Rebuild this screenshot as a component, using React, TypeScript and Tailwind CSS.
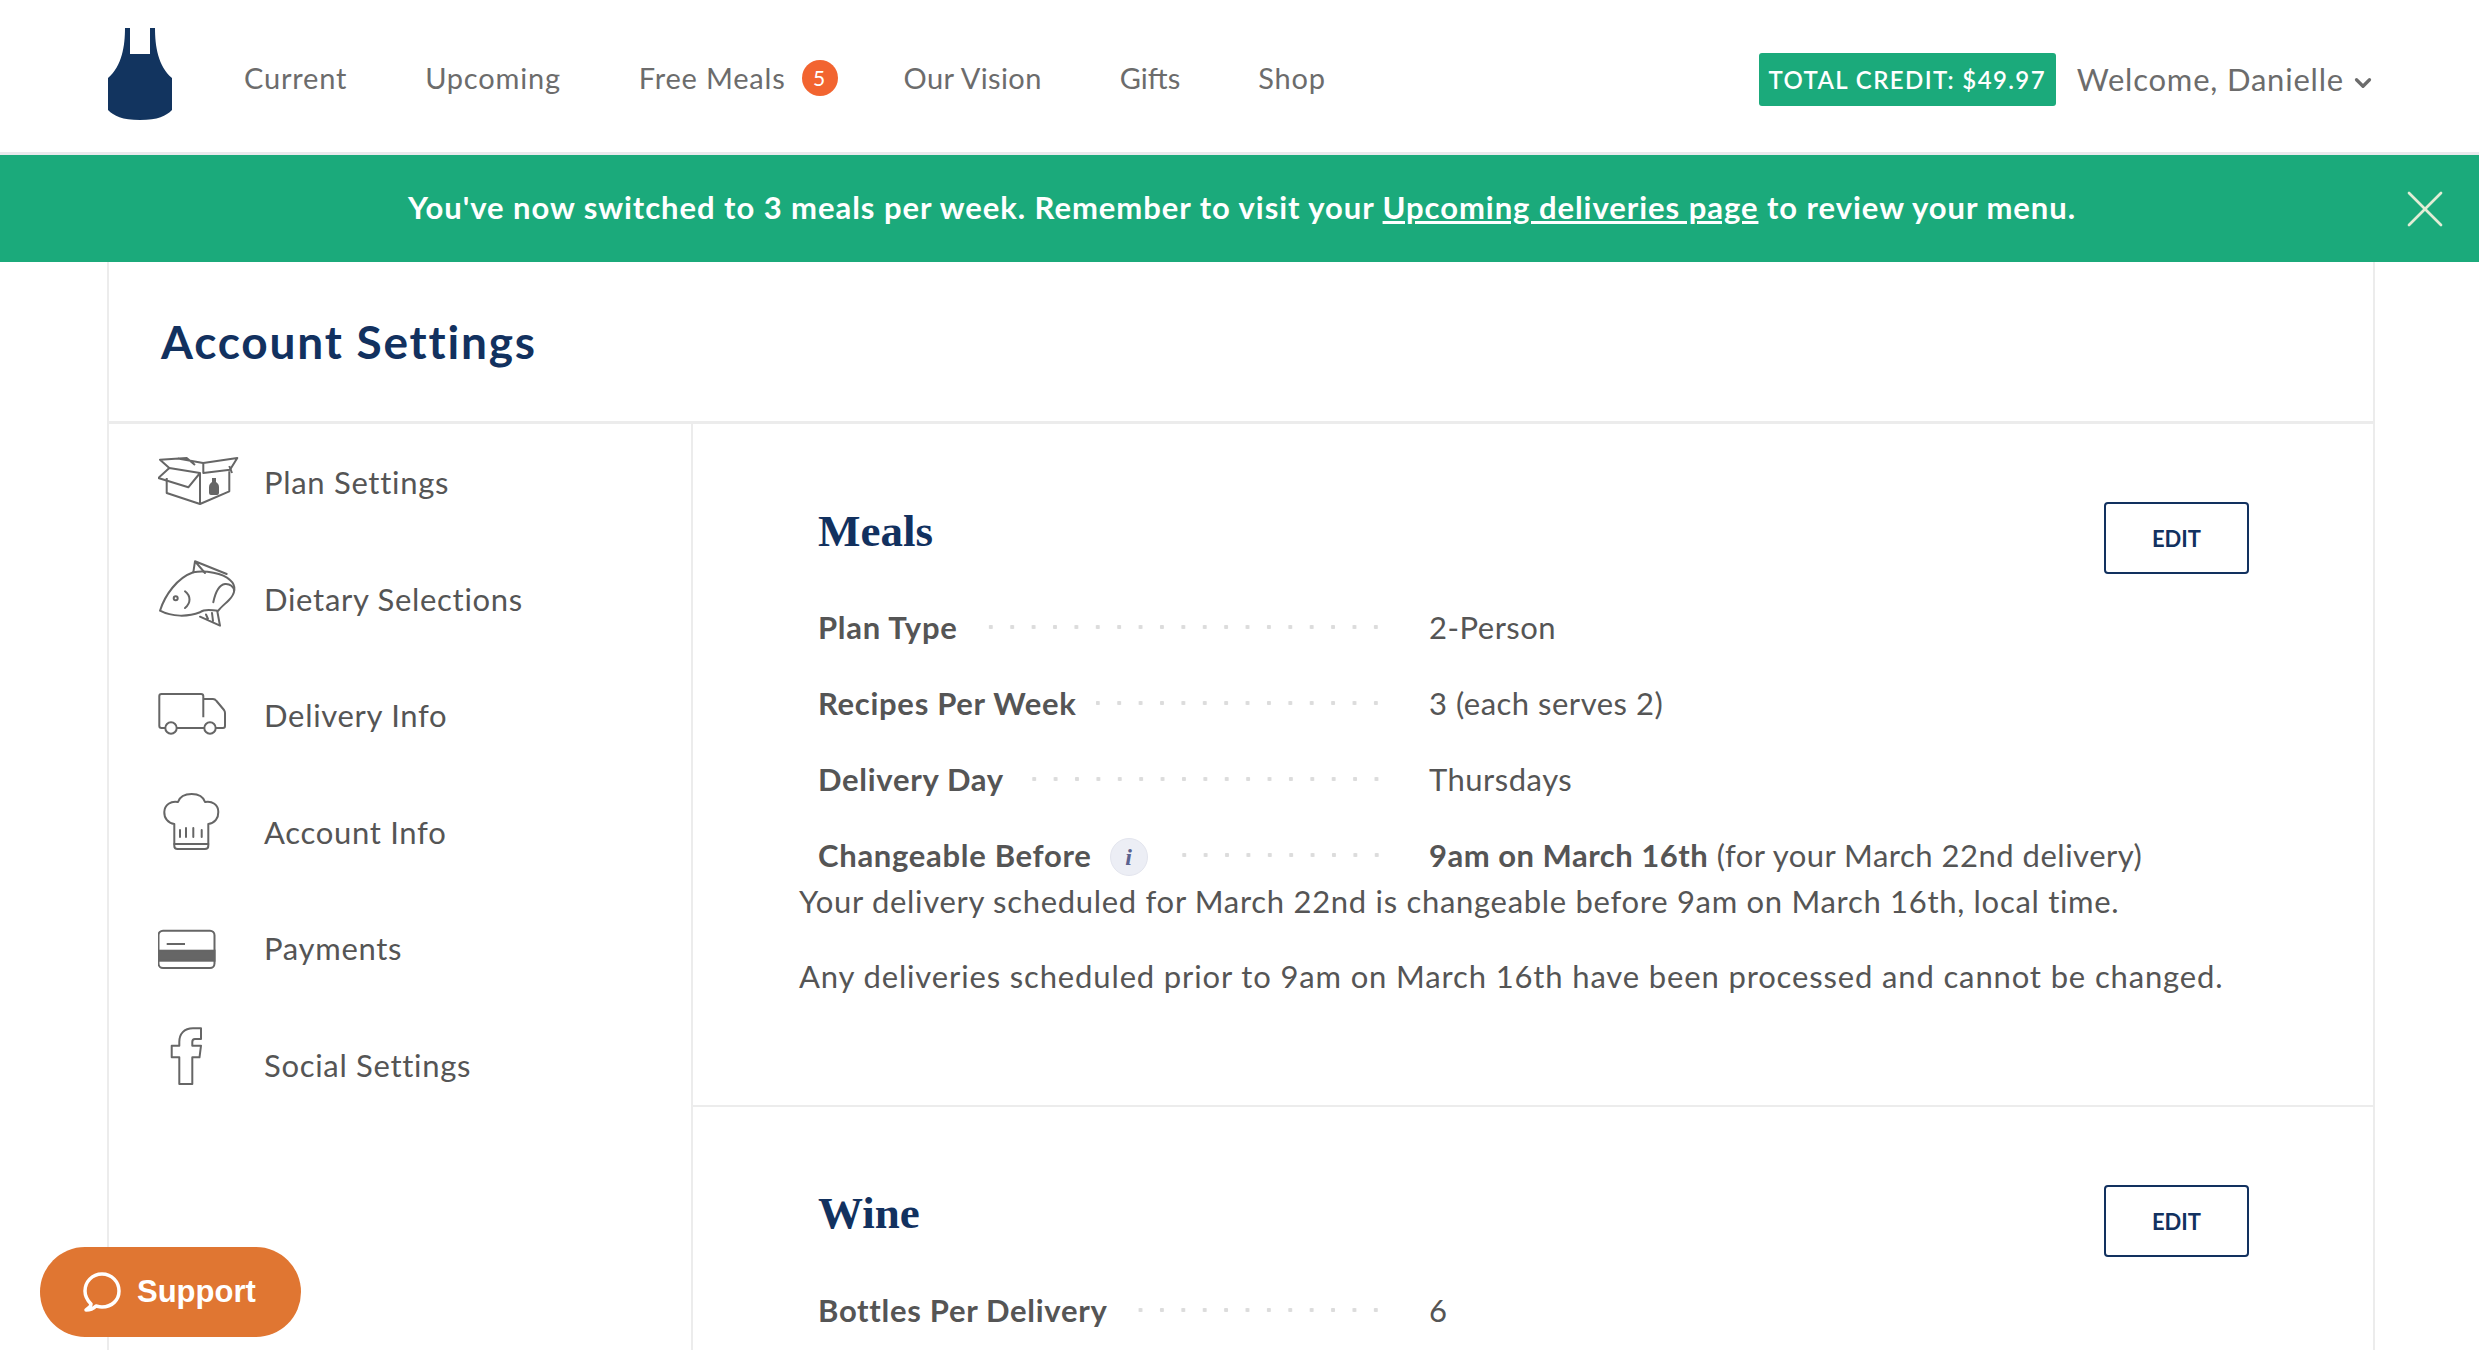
import { ChevronDown, X } from 'lucide-react';

const navLinks = [
  { label: 'Current', tracking: 'tracking-[0.8px]' },
  { label: 'Upcoming', tracking: 'tracking-[0.8px]' },
  { label: 'Free Meals', tracking: 'tracking-[0.8px]' },
  { label: 'Our Vision', tracking: 'tracking-[0.4px]' },
  { label: 'Gifts', tracking: 'tracking-normal' },
  { label: 'Shop', tracking: 'tracking-[0.8px]' },
];

const ink = '#666666';

function PlanIcon() {
  return (
    <svg viewBox="0 0 90 90" className="w-[90px] h-[90px] shrink-0" fill="none" stroke={ink} strokeWidth="2" strokeLinejoin="round">
      <path d="M8.7 41V56L42 67L71.3 54.3V34.3M42 67V36" />
      <path d="M45.3 35V26L79.3 21L72 32.7L45.3 36Z" />
      <path d="M0.3 41L11.3 31L42 36L30.3 50.3Z" />
      <path d="M11.3 31L2 22.7L28.7 21L37 28M20 21.5L45 26" />
      <path d="M71.3 29L74 36" />
      <path d="M51 50C51 47 53 46 54 45V41H58V45C59 46 61 47 61 50V56Q61 58 59 58H53Q51 58 51 56Z" fill={ink} stroke="none" />
    </svg>
  );
}

function FishIcon() {
  return (
    <svg viewBox="0 0 90 90" className="w-[90px] h-[90px] shrink-0" fill="none" stroke={ink} strokeWidth="2" strokeLinejoin="round" strokeLinecap="round">
      <path d="M2 56.7C7 41 19 24 35.3 18.3C47 16 65 19 72 26C79 32 77 40 71 46C67 50 63 53 60.3 56.7C55 57 48 54 42 58.3C30 63 14 63 2 56.7Z" />
      <path d="M55.3 48.3C57 40 60 31 67 30C72 29.5 76 33 76 37" />
      <path d="M35.3 18.3L37 7.3L68.7 20M37 7.3L47 19" />
      <path d="M42 62.7L62 71.7L59.3 57.3M48 60.5L50 65M54 59L55 67" />
      <circle cx="17.7" cy="44.3" r="2" />
      <path d="M27 37.3C33 42 33 49 27 54" />
    </svg>
  );
}

function TruckIcon() {
  return (
    <svg viewBox="0 0 90 90" className="w-[90px] h-[90px] shrink-0" fill="none" stroke={ink} strokeWidth="2" strokeLinejoin="round">
      <path d="M7.3 58H3.5Q1.3 58 1.3 55.7V26Q1.3 24 3.5 24H43Q45.3 24 45.3 26V47.3" />
      <path d="M45.3 29H55Q57 29 58.5 31L66 40Q67 41.5 67 43V55.7Q67 58 65 58H57.7M46.3 58H18.7" />
      <circle cx="13" cy="58" r="5.7" />
      <circle cx="52" cy="58" r="5.7" />
    </svg>
  );
}

function HatIcon() {
  return (
    <svg viewBox="0 0 90 90" className="w-[90px] h-[90px] shrink-0" fill="none" stroke={ink} strokeWidth="2" strokeLinejoin="round" strokeLinecap="round">
      <path d="M16.3 37C10 36 6 31 6.3 25C6.5 18 13 13.5 20 15C22 9 28 7 33.7 7C39 7 45 9 47 15C54 13.5 60.5 18 60.3 25C60.5 31 57 36 50.3 37V59Q50.3 62 47 62H19.6Q16.3 62 16.3 59Z" />
      <path d="M16.3 57H50.3M22 43V50M28 41V50M35.3 41V50M43.7 43V50" />
    </svg>
  );
}

function CardIcon() {
  return (
    <svg viewBox="0 0 90 90" className="w-[90px] h-[90px] shrink-0" fill="none" stroke={ink} strokeWidth="2">
      <rect x="0.5" y="27.7" width="56" height="37.3" rx="4.5" />
      <rect x="0.5" y="47.7" width="56" height="10" fill={ink} />
      <path d="M8.7 41H27" />
    </svg>
  );
}

function FacebookIcon() {
  return (
    <svg viewBox="0 0 90 90" className="w-[90px] h-[90px] shrink-0" fill="none" stroke={ink} strokeWidth="2" strokeLinejoin="round">
      <path d="M43 8.3H35C26 8.3 21.3 14 21.3 22V25.7H13.7V37.3H21.3V64H34.3V37.3H41.5L43 25.7H34.3V22Q34.3 19 37 19H43Z" />
    </svg>
  );
}

const sideItems = [
  { label: 'Plan Settings', icon: <PlanIcon /> },
  { label: 'Dietary Selections', icon: <FishIcon /> },
  { label: 'Delivery Info', icon: <TruckIcon /> },
  { label: 'Account Info', icon: <HatIcon /> },
  { label: 'Payments', icon: <CardIcon /> },
  { label: 'Social Settings', icon: <FacebookIcon /> },
];

function Row({ label, info, children }: { label: string; info?: boolean; children: React.ReactNode }) {
  return (
    <div className="flex items-center h-[76px]">
      <div className="w-[569px] flex items-center">
        <span className="font-bold whitespace-nowrap text-[#555555] tracking-[0.7px]">{label}</span>
        {info && (
          <span className="ml-[18px] w-[38px] h-[38px] shrink-0 rounded-full bg-[#eceef5] border border-[#e3e5ee] mt-[4px] flex items-center justify-center font-['Liberation_Serif',serif] italic font-bold text-[24px] text-[#5b628f]">
            i
          </span>
        )}
        <span className="flex-1 min-w-[20px] ml-[20px] h-[6px] bg-[radial-gradient(circle,#dcdcdc_2px,transparent_2.5px)] bg-[length:21.4px_6px] bg-right bg-repeat-x" />
      </div>
      <div className="ml-[42px] whitespace-nowrap text-[#555555] tracking-[0.5px]">{children}</div>
    </div>
  );
}

function EditButton() {
  return (
    <button className="w-[145px] h-[72px] border-2 border-[#12315f] rounded-[4px] text-[#12315f] text-[22px] font-bold bg-white">
      EDIT
    </button>
  );
}

export default function App() {
  return (
    <div className="relative h-[1350px] overflow-hidden bg-white font-['Lato',sans-serif]">
      {/* Top nav */}
      <header className="h-[155px] flex items-center border-b-[3px] border-[#e9e9ec] pl-[108px] pr-[103px] text-[#6c6c6c] text-[29px]">
        <svg viewBox="0 0 64 92" className="w-[64px] h-[92px] -mt-[4px]" fill="#12345f">
          <path fillRule="evenodd" d="M17 0H22V26H42V0H47C47 18 50 38 64 50V82C58 88 50 92 32 92C14 92 6 88 0 82V50C14 38 17 18 17 0Z" />
        </svg>
        <nav className="ml-[72px] flex items-center gap-[78px] mt-[3px]">
          {navLinks.map((link) => (
            <a key={link.label} className={`flex items-center whitespace-nowrap ${link.tracking}`}>
              {link.label}
              {link.label === 'Free Meals' && (
                <span className="ml-[16px] -mr-[12px] w-[36px] h-[36px] rounded-full bg-[#f26430] text-white text-[21px] flex items-center justify-center">5</span>
              )}
            </a>
          ))}
        </nav>
        <div className="ml-auto flex items-center mt-[7px]">
          <div className="w-[297px] h-[53px] rounded-[3px] bg-[#1baa7b] text-white text-[24px] font-semibold tracking-[1.4px] flex items-center justify-center whitespace-nowrap">
            TOTAL CREDIT: $49.97
          </div>
          <div className="ml-[21px] flex items-center text-[31px] whitespace-nowrap tracking-[0.8px]">
            Welcome, Danielle
            <ChevronDown className="w-[26px] h-[26px] ml-[6px] mt-[6px]" strokeWidth={3} />
          </div>
        </div>
      </header>

      {/* Notice banner */}
      <div className="relative h-[107px] bg-[#1baa7b] flex items-center justify-center pl-[5px] text-white text-[31px] font-bold tracking-[0.95px]">
        <p className="-mt-[2px] whitespace-nowrap">
          You've now switched to 3 meals per week. Remember to visit your <a className="underline">Upcoming deliveries page</a> to review your menu.
        </p>
        <X className="absolute right-[22px] top-[22px] w-[64px] h-[64px] text-[#e2edd6]" strokeWidth={1} />
      </div>

      {/* Framed content */}
      <main className="ml-[107px] mr-[104px] border-x-2 border-[#ececec]">
        <div className="h-[162px] flex items-center pl-[52px] border-b-[3px] border-[#ececec]">
          <h1 className="text-[#12315f] text-[46px] font-bold tracking-[1.8px]">Account Settings</h1>
        </div>
        <div className="flex text-[31px] text-[#555555]">
          <aside className="w-[584px] shrink-0 border-r-2 border-[#ececec] pl-[49px] h-[928px]">
            {sideItems.map((item) => (
              <a key={item.label} className="flex items-center h-[116.5px] tracking-[0.7px]">
                {item.icon}
                <span className="ml-[16px] whitespace-nowrap">{item.label}</span>
              </a>
            ))}
          </aside>
          <div className="flex-1">
            <section className="h-[683px] border-b-2 border-[#ececec] pl-[125px] pr-[124px] pt-[78px]">
              <div className="flex justify-between items-start h-[86px]">
                <h2 className="font-['Liberation_Serif',serif] font-bold text-[45px] leading-[50px] mt-[4px] text-[#12315f]">Meals</h2>
                <EditButton />
              </div>
              <div className="mt-[1px]">
                <Row label="Plan Type">2-Person</Row>
                <Row label="Recipes Per Week">3 (each serves 2)</Row>
                <Row label="Delivery Day">Thursdays</Row>
                <Row label="Changeable Before" info>
                  <b>9am on March 16th</b> (for your March 22nd delivery)
                </Row>
              </div>
              <div className="-ml-[19px] -mt-[15px] whitespace-nowrap">
                <p className="leading-[46px] tracking-[0.7px]">Your delivery scheduled for March 22nd is changeable before 9am on March 16th, local time.</p>
                <p className="leading-[46px] mt-[29px] tracking-[0.86px]">Any deliveries scheduled prior to 9am on March 16th have been processed and cannot be changed.</p>
              </div>
            </section>
            <section className="pl-[125px] pr-[124px] pt-[78px]">
              <div className="flex justify-between items-start h-[86px]">
                <h2 className="font-['Liberation_Serif',serif] font-bold text-[45px] leading-[50px] mt-[3px] text-[#12315f]">Wine</h2>
                <EditButton />
              </div>
              <div className="mt-[1px]">
                <Row label="Bottles Per Delivery">6</Row>
              </div>
            </section>
          </div>
        </div>
      </main>

      {/* Support button */}
      <button className="absolute left-[40px] top-[1247px] w-[261px] h-[90px] rounded-[45px] bg-[#e07632] text-white font-['Liberation_Sans',sans-serif] font-bold text-[31px] flex items-center pl-[43px]">
        <svg viewBox="0 0 38 40" className="w-[38px] h-[40px]" fill="none" stroke="#fff" strokeWidth="3.5" strokeLinecap="round" strokeLinejoin="round">
          <path d="M8 32C4 28 2 24 2 19C2 10 9 2 19 2C29 2 36 10 36 19C36 28 29 35 19 35C17 35 15 34.5 13 34C10 37 6 38 3 38C5 36 8 35 8 32Z" />
        </svg>
        <span className="ml-[16px]">Support</span>
      </button>
    </div>
  );
}
